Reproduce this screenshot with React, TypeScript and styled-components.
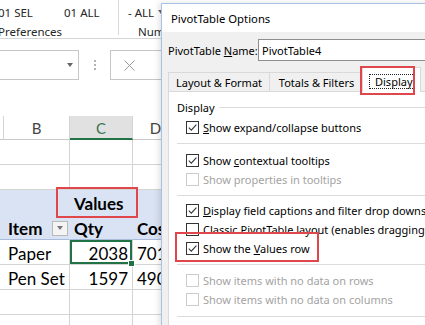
import React from "react";
import styled, { createGlobalStyle } from "styled-components";

const Global = createGlobalStyle`
  html, body { margin: 0; padding: 0; background: #fff; overflow: hidden; }
  #root { width: 425px; height: 325px; }
`;

const Screen = styled.div`
  position: relative;
  width: 425px;
  height: 325px;
  overflow: hidden;
  background: #fff;
`;

const Excel = styled.div`
  display: flex;
  flex-direction: column;
  width: 425px;
  height: 325px;
`;

/* ---------- ribbon ---------- */
const Ribbon = styled.div`
  display: flex;
  flex: none;
  height: 38px;
  border-bottom: 1px solid #d5d5d5;
  font-family: "Noto Sans", sans-serif;
  font-size: 11.5px;
  color: #262626;
`;

const RibbonGroup = styled.div<{ $w?: number; $sep?: boolean }>`
  box-sizing: border-box;
  width: ${(p) => (p.$w ? `${p.$w}px` : "auto")};
  flex: ${(p) => (p.$w ? "none" : "1")};
  height: 35px;
  border-right: ${(p) => (p.$sep ? "1px solid #dadada" : "none")};
  display: flex;
  flex-direction: column;
  padding-top: 3px;
`;

const RibbonRow = styled.div<{ $indent: number; $h: number }>`
  flex: none;
  display: flex;
  align-items: center;
  height: ${(p) => p.$h}px;
  margin-left: ${(p) => p.$indent}px;
  white-space: nowrap;
`;

const RibbonItem = styled.span<{ $w?: number }>`
  display: inline-flex;
  align-items: center;
  width: ${(p) => (p.$w ? `${p.$w}px` : "auto")};
`;

const Caret = styled.span`
  display: inline-block;
  width: 0;
  height: 0;
  border-left: 3.5px solid transparent;
  border-right: 3.5px solid transparent;
  border-top: 4px solid #666;
  margin-left: 4px;
`;

/* ---------- formula bar ---------- */
const FormulaBar = styled.div`
  display: flex;
  align-items: flex-start;
  flex: none;
  height: 77px;
  box-sizing: border-box;
  padding-top: 11px;
`;

const NameBox = styled.div`
  box-sizing: border-box;
  width: 80px;
  height: 30px;
  margin-left: -1px;
  border: 1px solid #c6c6c6;
  display: flex;
  align-items: center;
  justify-content: flex-end;
  padding-right: 5px;
`;

const Dots = styled.div`
  display: flex;
  flex-direction: column;
  justify-content: center;
  gap: 2px;
  width: 3px;
  height: 30px;
  margin-left: 15px;
`;

const Dot = styled.span`
  display: block;
  width: 2px;
  height: 2px;
  background: #b3b3b3;
`;

const CancelBox = styled.div`
  box-sizing: border-box;
  width: 70px;
  height: 30px;
  margin-left: 13px;
  border: 1px solid #c6c6c6;
  display: flex;
  align-items: center;
  padding-left: 13px;
`;

/* ---------- sheet ---------- */
const Sheet = styled.div`
  display: grid;
  grid-template-columns: 4px 66px 63px 46px;
  grid-template-rows: 24px repeat(8, 25px);
  font-family: Lato, "Liberation Sans", sans-serif;
`;

const ColHead = styled.div<{ $selected?: boolean }>`
  box-sizing: border-box;
  display: flex;
  align-items: center;
  justify-content: center;
  background: ${(p) => (p.$selected ? "#e1e1e1" : "#fff")};
  border-right: 1px solid #d4d4d4;
  border-bottom: ${(p) => (p.$selected ? "2px solid #217346" : "1px solid #c8c8c8")};
  color: ${(p) => (p.$selected ? "#3b7553" : "#444")};
  font-size: 15px;
  padding-top: 1px;
`;

const Cell = styled.div<{
  $fill?: string;
  $right?: boolean;
  $bold?: boolean;
  $line?: string;
  $selected?: boolean;
}>`
  position: relative;
  box-sizing: border-box;
  display: flex;
  align-items: center;
  justify-content: ${(p) => (p.$right ? "flex-end" : "flex-start")};
  padding: 2px 4px 0 4px;
  background: ${(p) => p.$fill ?? "#fff"};
  border-right: 1px solid ${(p) => p.$fill ?? "#d4d4d4"};
  border-bottom: 1px solid ${(p) => p.$line ?? p.$fill ?? "#d4d4d4"};
  box-shadow: ${(p) => (p.$selected ? "inset 0 0 0 2px #217346" : "none")};
  font-size: 17px;
  font-weight: ${(p) => (p.$bold ? 700 : 400)};
  color: #000;
  white-space: nowrap;
`;

const CellText = styled.span`
  flex: 1;
`;

const FillHandle = styled.span`
  position: absolute;
  right: -3px;
  bottom: -3px;
  width: 5px;
  height: 5px;
  background: #217346;
  border: 1px solid #fff;
  z-index: 2;
`;

const FilterButton = styled.span`
  box-sizing: border-box;
  flex: none;
  width: 16px;
  height: 15px;
  margin-right: -3px;
  background: #f4f4f4;
  border: 1px solid #b9b9b9;
  display: flex;
  align-items: center;
  justify-content: center;
`;

const FilterCaret = styled.span`
  width: 0;
  height: 0;
  border-left: 3.5px solid transparent;
  border-right: 3.5px solid transparent;
  border-top: 4px solid #777;
`;

/* ---------- annotation ---------- */
const Callout = styled.span<{ $l: number; $t: number; $w: number; $h: number }>`
  position: absolute;
  left: ${(p) => p.$l}px;
  top: ${(p) => p.$t}px;
  width: ${(p) => p.$w}px;
  height: ${(p) => p.$h}px;
  box-sizing: border-box;
  border: 2px solid #e0474c;
  pointer-events: none;
  z-index: 3;
`;

/* ---------- dialog ---------- */
const Dialog = styled.div`
  position: absolute;
  left: 161px;
  top: 3px;
  width: 300px;
  height: 340px;
  box-sizing: border-box;
  display: flex;
  flex-direction: column;
  background: #f0f0f0;
  border: 1px solid #a9c2e3;
  box-shadow: -2px 0 6px rgba(0, 0, 0, 0.12);
  font-family: "Noto Sans", sans-serif;
  font-size: 11px;
  color: #000;
`;

const TitleBar = styled.div`
  flex: none;
  height: 28px;
  background: #fff;
  display: flex;
  align-items: center;
  padding-left: 9px;
  font-size: 11.3px;
`;

const Body = styled.div`
  flex: 1;
  display: flex;
  flex-direction: column;
  padding-left: 6px;
`;

const NameRow = styled.div`
  display: flex;
  align-items: center;
  height: 22px;
  margin-top: 7px;
`;

const NameLabel = styled.span`
  width: 90px;
  flex: none;
  white-space: nowrap;
`;

const TextInput = styled.div`
  flex: 1;
  box-sizing: border-box;
  height: 22px;
  background: #fff;
  border: 1px solid #8e8e8e;
  display: flex;
  align-items: center;
  padding-left: 3px;
`;

const TabStrip = styled.div`
  display: flex;
  align-items: flex-end;
  height: 24px;
  margin-top: 6px;
  position: relative;
  z-index: 1;
`;

const Tab = styled.div<{ $w: number }>`
  box-sizing: border-box;
  width: ${(p) => p.$w}px;
  height: 19px;
  margin-right: -1px;
  border: 1px solid #d9d9d9;
  border-bottom: none;
  background: #f0f0f0;
  display: flex;
  align-items: center;
  justify-content: center;
  white-space: nowrap;
  padding-top: 1px;
`;

const ActiveTab = styled.div<{ $w: number }>`
  position: relative;
  box-sizing: border-box;
  width: ${(p) => p.$w}px;
  height: 25px;
  margin-left: -1px;
  margin-bottom: -1px;
  border: 1px solid #d9d9d9;
  border-bottom: none;
  background: #fff;
  display: flex;
  align-items: center;
  padding: 2px 0 0 6px;
  white-space: nowrap;
`;

const FocusLabel = styled.span`
  display: inline-flex;
  align-items: center;
  height: 13px;
  padding: 0 1px 0 5px;
  border: 1px dotted #222;
`;

const Panel = styled.div`
  flex: 1;
  box-sizing: border-box;
  margin-right: -40px;
  background: #fff;
  border: 1px solid #d9d9d9;
  padding: 7px 0 0 8px;
  display: flex;
  flex-direction: column;
`;

const GroupHead = styled.div`
  display: flex;
  align-items: center;
  gap: 4px;
  height: 16px;
`;

const GroupRule = styled.span`
  flex: 1;
  height: 1px;
  background: #dcdcdc;
`;

const Section = styled.div<{ $pt: number; $pb: number }>`
  display: flex;
  flex-direction: column;
  padding: ${(p) => p.$pt}px 0 ${(p) => p.$pb}px 9px;
  border-bottom: 1px solid #dcdcdc;
`;

const CheckRow = styled.div<{ $disabled?: boolean }>`
  position: relative;
  display: flex;
  align-items: center;
  gap: 4px;
  height: 19px;
  white-space: nowrap;
  color: ${(p) => (p.$disabled ? "#a3a3a3" : "#000")};
`;

const Box = styled.span<{ $disabled?: boolean }>`
  box-sizing: border-box;
  flex: none;
  width: 13px;
  height: 13px;
  background: #fff;
  border: 1px solid ${(p) => (p.$disabled ? "#cccccc" : "#333")};
  display: flex;
  align-items: center;
  justify-content: center;
`;

const Check = () => (
  <svg width="11" height="11" viewBox="0 0 11 11">
    <path d="M1.8 5.6 L4.3 8.1 L9.4 2.6" fill="none" stroke="#333" strokeWidth="1.1" />
  </svg>
);

const XIcon = () => (
  <svg width="11" height="11" viewBox="0 0 11 11">
    <path d="M0.5 0.5 L10.5 10.5 M10.5 0.5 L0.5 10.5" stroke="#9a9a9a" strokeWidth="1" />
  </svg>
);

type Opt = { label: React.ReactNode; checked?: boolean; disabled?: boolean; callout?: boolean };

const Option = ({ label, checked, disabled, callout }: Opt) => (
  <CheckRow $disabled={disabled}>
    {callout && <Callout $l={-11} $t={-7} $w={144} $h={30} />}
    <Box $disabled={disabled}>{checked && <Check />}</Box>
    <span>{label}</span>
  </CheckRow>
);

const BLUE = "#dae3f3";

export default function App() {
  return (
    <Screen>
      <Global />
      <Excel>
        <Ribbon>
          <RibbonGroup $w={119} $sep>
            <RibbonRow $indent={-2} $h={18}>
              <RibbonItem $w={66}>01 SEL</RibbonItem>
              <RibbonItem>01 ALL</RibbonItem>
            </RibbonRow>
            <RibbonRow $indent={-2} $h={20}>
              Preferences
            </RibbonRow>
          </RibbonGroup>
          <RibbonGroup>
            <RibbonRow $indent={9} $h={18}>
              <RibbonItem>
                -&nbsp;ALL
                <Caret />
              </RibbonItem>
            </RibbonRow>
            <RibbonRow $indent={19} $h={20}>
              Num
            </RibbonRow>
          </RibbonGroup>
        </Ribbon>

        <FormulaBar>
          <NameBox>
            <Caret />
          </NameBox>
          <Dots>
            <Dot />
            <Dot />
            <Dot />
          </Dots>
          <CancelBox>
            <XIcon />
          </CancelBox>
        </FormulaBar>

        <Sheet>
          <ColHead />
          <ColHead>B</ColHead>
          <ColHead $selected>C</ColHead>
          <ColHead>D</ColHead>

          <Cell />
          <Cell />
          <Cell />
          <Cell />

          <Cell />
          <Cell />
          <Cell />
          <Cell />

          <Cell $fill={BLUE} />
          <Cell $fill={BLUE} />
          <Cell $fill={BLUE} $bold>
            <Callout $l={-14} $t={-3} $w={82} $h={31} />
            Values
          </Cell>
          <Cell $fill={BLUE} />

          <Cell $fill={BLUE} $line="#a9bcdc" />
          <Cell $fill={BLUE} $line="#a9bcdc" $bold>
            <CellText>Item</CellText>
            <FilterButton>
              <FilterCaret />
            </FilterButton>
          </Cell>
          <Cell $fill={BLUE} $line="#a9bcdc" $bold>
            Qty
          </Cell>
          <Cell $fill={BLUE} $line="#a9bcdc" $bold>
            Cost
          </Cell>

          <Cell />
          <Cell>Paper</Cell>
          <Cell $right $selected>
            2038
            <FillHandle />
          </Cell>
          <Cell>7015</Cell>

          <Cell />
          <Cell>Pen Set</Cell>
          <Cell $right>1597</Cell>
          <Cell>4905</Cell>

          <Cell />
          <Cell />
          <Cell />
          <Cell />

          <Cell />
          <Cell />
          <Cell />
          <Cell />
        </Sheet>
      </Excel>

      <Dialog>
        <TitleBar>PivotTable Options</TitleBar>
        <Body>
          <NameRow>
            <NameLabel>
              PivotTable <u>N</u>ame:
            </NameLabel>
            <TextInput>PivotTable4</TextInput>
          </NameRow>
          <TabStrip>
            <Tab $w={102}>Layout &amp; Format</Tab>
            <Tab $w={95}>Totals &amp; Filters</Tab>
            <ActiveTab $w={59}>
              <Callout $l={-3} $t={-2} $w={55} $h={29} />
              <FocusLabel>Display</FocusLabel>
            </ActiveTab>
          </TabStrip>
          <Panel>
            <GroupHead>
              <span>Display</span>
              <GroupRule />
            </GroupHead>
            <Section $pt={3} $pb={6}>
              <Option checked label={<><u>S</u>how expand/collapse buttons</>} />
            </Section>
            <Section $pt={7} $pb={6}>
              <Option checked label={<>Show <u>c</u>ontextual tooltips</>} />
              <Option disabled label="Show properties in tooltips" />
            </Section>
            <Section $pt={5} $pb={6}>
              <Option checked label={<><u>D</u>isplay field captions and filter drop downs</>} />
              <Option label="Classic PivotTable layout (enables dragging of fields in the grid)" />
              <Option checked callout label={<>Show the <u>V</u>alues row</>} />
            </Section>
            <Section $pt={6} $pb={7}>
              <Option disabled label="Show items with no data on rows" />
              <Option disabled label="Show items with no data on columns" />
            </Section>
          </Panel>
        </Body>
      </Dialog>
    </Screen>
  );
}
